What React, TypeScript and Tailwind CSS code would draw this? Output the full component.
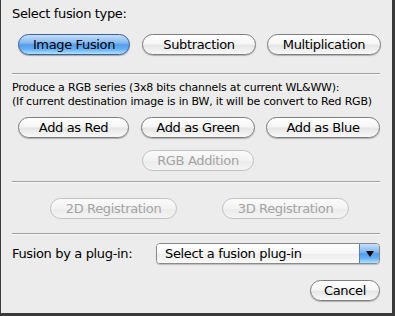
import React from "react";

type BtnProps = {
  label: string;
  w: string;
  variant?: "normal" | "default" | "disabled";
  className?: string;
};

function AquaButton({ label, w, variant = "normal", className = "" }: BtnProps) {
  const base =
    "h-[21px] rounded-full flex items-center justify-center leading-none whitespace-nowrap shrink-0 " + w + " " + className;
  if (variant === "default") {
    return (
      <div
        className={
          base +
          " border border-[#3b5f98] text-black shadow-[0_1px_1px_rgba(0,0,0,0.3)] bg-[linear-gradient(to_bottom,#c6def9_0%,#86bbf2_40%,#559de9_52%,#67b0f4_75%,#b0e2ff_100%)]"
        }
      >
        {label}
      </div>
    );
  }
  if (variant === "disabled") {
    return (
      <div
        className={
          base +
          " border border-[#c2c2c2] text-[#a4a4a4] bg-[linear-gradient(to_bottom,#fbfbfb_0%,#f2f2f2_50%,#ececec_55%,#f4f4f4_100%)]"
        }
      >
        {label}
      </div>
    );
  }
  return (
    <div
      className={
        base +
        " border border-[#7e7e7e] text-black shadow-[0_1px_1px_rgba(0,0,0,0.25)] bg-[linear-gradient(to_bottom,#ffffff_0%,#f6f6f6_45%,#e6e6e6_55%,#f8f8f8_100%)]"
      }
    >
      {label}
    </div>
  );
}

function Sep({ className = "" }: { className?: string }) {
  return <div className={"h-[2px] border-t border-t-[#a0a0a0] border-b border-b-[#f8f8f8] " + className} />;
}

export default function App() {
  return (
    <div className="w-[395px] h-[316px] box-border bg-[#ececec] border-l border-l-[#3c3c3c] border-r-[3px] border-r-[#3a3a3a] border-b-[3px] border-b-[#3a3a3a] font-['DejaVu_Sans',sans-serif] text-[13px] tracking-[-0.35px] text-black overflow-hidden">
      <div className="flex flex-col pl-[11px] pr-[12px] pt-[6px]">
        <div className="leading-[16px] h-[16px] whitespace-nowrap">Select fusion type:</div>
        <div className="flex mt-[12px] pl-[6px]">
          <AquaButton label="Image Fusion" w="w-[112px]" variant="default" />
          <AquaButton label="Subtraction" w="w-[114px]" className="ml-[12px]" />
          <AquaButton label="Multiplication" w="w-[114px]" className="ml-[11px]" />
        </div>
        <Sep className="mt-[18px]" />
        <div className="mt-[6px] leading-[14px] text-[11px] tracking-[-0.2px] whitespace-nowrap">
          <div>Produce a RGB series (3x8 bits channels at current WL&amp;WW):</div>
          <div>(If current destination image is in BW, it will be convert to Red RGB)</div>
        </div>
        <div className="flex mt-[8px] pl-[6px]">
          <AquaButton label="Add as Red" w="w-[111px]" />
          <AquaButton label="Add as Green" w="w-[114px]" className="ml-[12px]" />
          <AquaButton label="Add as Blue" w="w-[114px]" className="ml-[11px]" />
        </div>
        <div className="flex mt-[12px] pl-[130px]">
          <AquaButton label="RGB Addition" w="w-[112px]" variant="disabled" />
        </div>
        <Sep className="mt-[10px]" />
        <div className="flex mt-[15px] pl-[38px]">
          <AquaButton label="2D Registration" w="w-[127px]" variant="disabled" />
          <AquaButton label="3D Registration" w="w-[127px]" variant="disabled" className="ml-[45px]" />
        </div>
        <Sep className="mt-[14px]" />
        <div className="flex items-center mt-[8px] h-[21px]">
          <div className="w-[144px] shrink-0 whitespace-nowrap">Fusion by a plug-in:</div>
          <div className="flex h-[21px] w-[224px] rounded-[4px] border border-[#8a8a8a] overflow-hidden shadow-[0_1px_1px_rgba(0,0,0,0.2)]">
            <div className="flex-1 flex items-center pl-[8px] whitespace-nowrap bg-[linear-gradient(to_bottom,#ffffff_0%,#f7f7f7_50%,#ededed_55%,#fafafa_100%)]">
              Select a fusion plug-in
            </div>
            <div className="w-[20px] flex items-center justify-center border-l border-l-[#5a7fb5] bg-[linear-gradient(to_bottom,#c6def9_0%,#86bbf2_40%,#559de9_52%,#67b0f4_75%,#b0e2ff_100%)]">
              <svg width="8" height="6" viewBox="0 0 8 6">
                <path d="M0 0 L8 0 L4 6 Z" fill="#000" />
              </svg>
            </div>
          </div>
        </div>
        <div className="flex justify-end mt-[16px]">
          <AquaButton label="Cancel" w="w-[70px]" />
        </div>
      </div>
    </div>
  );
}
